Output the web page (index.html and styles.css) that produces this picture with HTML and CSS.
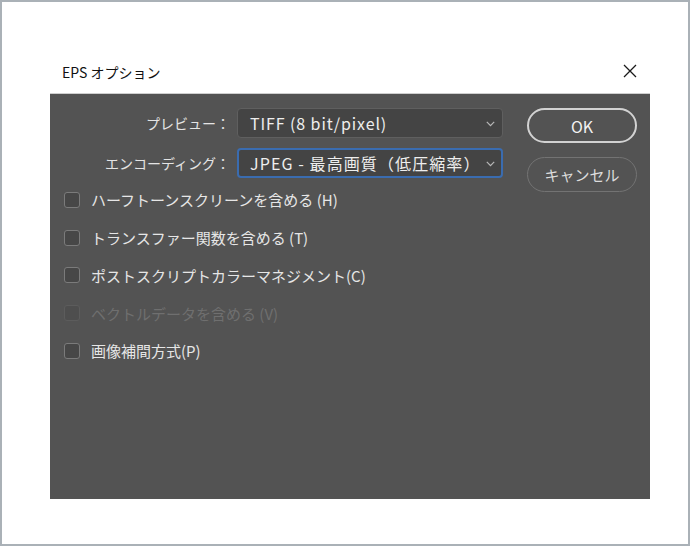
FILE: index.html
```html
<!DOCTYPE html>
<html lang="ja">
<head>
<meta charset="utf-8">
<title>EPS オプション</title>
<link rel="stylesheet" href="styles.css">
</head>
<body>
<div class="frame">
  <div class="titlebar">
    <span class="title">EPS オプション</span>
    <svg class="close" width="14" height="14" viewBox="0 0 14 14"><path d="M1 1 L13 13 M13 1 L1 13" stroke="#1a1a1a" stroke-width="1.3" fill="none"/></svg>
  </div>
  <div class="panel">
    <div class="form">
      <label class="flabel">プレビュー：</label>
      <div class="select"><span>TIFF (8 bit/pixel)</span><svg class="chev" width="9" height="6" viewBox="0 0 9 6"><path d="M0.8 0.8 L4.5 4.6 L8.2 0.8" stroke="#b8b8b8" stroke-width="1.2" fill="none"/></svg></div>
      <label class="flabel">エンコーディング：</label>
      <div class="select focus"><span>JPEG - 最高画質（低圧縮率）</span><svg class="chev" width="9" height="6" viewBox="0 0 9 6"><path d="M0.8 0.8 L4.5 4.6 L8.2 0.8" stroke="#b8b8b8" stroke-width="1.2" fill="none"/></svg></div>
    </div>
    <div class="buttons">
      <button class="btn primary">OK</button>
      <button class="btn">キャンセル</button>
    </div>
    <ul class="checks">
      <li class="row"><span class="box"></span><span>ハーフトーンスクリーンを含める (H)</span></li>
      <li class="row"><span class="box"></span><span>トランスファー関数を含める (T)</span></li>
      <li class="row"><span class="box"></span><span>ポストスクリプトカラーマネジメント(C)</span></li>
      <li class="row disabled"><span class="box"></span><span>ベクトルデータを含める (V)</span></li>
      <li class="row"><span class="box"></span><span>画像補間方式(P)</span></li>
    </ul>
  </div>
</div>
</body>
</html>
```
FILE: styles.css
```css
* { box-sizing: border-box; }
html, body { margin: 0; padding: 0; background: #ffffff; }
body { font-family: "Noto Sans CJK JP", "Liberation Sans", sans-serif; }
.frame {
  width: 690px;
  height: 546px;
  border: 2px solid #aab1b7;
  background: #ffffff;
}
.titlebar {
  height: 91px;
  margin: 0 38px 0 48px;
  display: flex;
  align-items: flex-end;
  justify-content: space-between;
  padding: 0 13px 11px 12px;
}
.title {
  font-size: 14px;
  line-height: 20px;
  color: #111111;
}
.close { margin-bottom: 4px; }
.panel {
  margin: 0 38px 0 48px;
  height: 406px;
  border-top: 1px solid #cfcfcf;
  background: #535353;
  padding: 14px 13px 0 14px;
  display: grid;
  grid-template-columns: 439px 110px;
  grid-template-rows: auto 1fr;
  column-gap: 24px;
  align-content: start;
}
.form {
  display: grid;
  grid-template-columns: 166px 266px;
  column-gap: 7px;
  row-gap: 10px;
  align-items: center;
}
.flabel {
  text-align: right;
  font-size: 14px;
  color: #e4e4e4;
  white-space: nowrap;
}
.select {
  height: 30px;
  border: 1px solid #5f5f5f;
  border-radius: 4px;
  background: #444444;
  display: flex;
  align-items: center;
  justify-content: space-between;
  padding: 0 7px 0 12px;
  font-family: "Noto Sans CJK JP", sans-serif;
  font-size: 16px;
  letter-spacing: 0.9px;
  color: #eeeeee;
  white-space: nowrap;
}
.select.focus {
  border: 2px solid #3a6cb0;
  padding-left: 11px;
  padding-right: 6px;
}
.select.focus span { letter-spacing: 1.1px; }
.chev { margin-top: 2px; }
.buttons {
  grid-column: 2;
  grid-row: 1 / span 2;
  display: flex;
  flex-direction: column;
  gap: 14px;
}
.btn {
  width: 110px;
  height: 35px;
  border-radius: 18px;
  border: 2px solid #d2d2d2;
  background: transparent;
  color: #f2f2f2;
  font-family: "Noto Sans CJK JP", sans-serif;
  font-size: 16px;
  padding: 0;
}
.btn:not(.primary) {
  border: 1.5px solid #737373;
  color: #dcdcdc;
  font-size: 15px;
}
.checks {
  grid-column: 1;
  grid-row: 2;
  list-style: none;
  margin: 3px 0 0 0;
  padding: 0;
}
.row {
  height: 37.75px;
  display: flex;
  align-items: center;
  gap: 11px;
  font-size: 15px;
  color: #e6e6e6;
  white-space: nowrap;
}
.box {
  width: 16px;
  height: 16px;
  border: 1px solid #7b7b7b;
  border-radius: 3px;
  background: #474747;
  flex: none;
}
.row.disabled { color: #6f6f6f; }
.row.disabled .box { border-color: #5c5c5c; background: #4e4e4e; }
```
